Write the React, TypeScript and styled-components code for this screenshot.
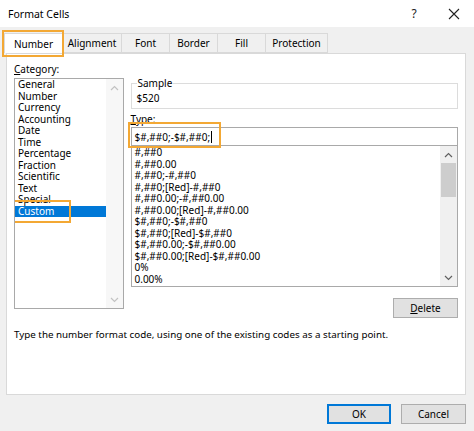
import styled, { createGlobalStyle } from "styled-components"

const GlobalStyle = createGlobalStyle`
  html, body {
    margin: 0;
    padding: 0;
    background: #ffffff;
  }
  body {
    font-family: "Noto Sans", "Open Sans", sans-serif;
    color: #000;
  }
`

const Dialog = styled.div`
  width: 474px;
  height: 431px;
  background: #f0f0f0;
  display: flex;
  flex-direction: column;
  overflow: hidden;
`

const TitleBar = styled.div`
  height: 27px;
  background: #ffffff;
  display: flex;
  align-items: center;
  padding-left: 8px;
  font-size: 10.5px;
`

const TitleText = styled.div`
  flex: 1;
`

const TitleButton = styled.div`
  width: 40px;
  height: 27px;
  display: flex;
  align-items: center;
  justify-content: center;
  font-size: 12px;
  color: #222;
`

const TabRow = styled.div`
  display: flex;
  padding: 6px 0 0 4px;
  height: 20px;
`

const Tab = styled.div<{ $w: number; $active?: boolean }>`
  position: relative;
  width: ${(p) => p.$w}px;
  height: 20px;
  box-sizing: border-box;
  display: flex;
  align-items: center;
  justify-content: center;
  font-size: 10px;
  background: ${(p) => (p.$active ? "#ffffff" : "#f0f0f0")};
  border: 1px solid #d9d9d9;
  border-left: none;
  border-bottom: ${(p) => (p.$active ? "none" : "1px solid #d9d9d9")};
  z-index: ${(p) => (p.$active ? 2 : 1)};
  &:first-child {
    border-left: 1px solid #d9d9d9;
  }
`

const Highlight = styled.div<{ $l: number; $t: number; $w: number; $h: number }>`
  position: absolute;
  left: ${(p) => p.$l}px;
  top: ${(p) => p.$t}px;
  width: ${(p) => p.$w}px;
  height: ${(p) => p.$h}px;
  box-sizing: border-box;
  border: 2.5px solid #f3a834;
  pointer-events: none;
  z-index: 5;
`

const Panel = styled.div`
  margin-left: 6px;
  width: 460px;
  height: 342px;
  box-sizing: border-box;
  background: #ffffff;
  border: 1px solid #d9d9d9;
  padding: 8px 7px 0 7px;
  font-size: 10px;
`

const Columns = styled.div`
  display: flex;
  gap: 7px;
`

const LeftCol = styled.div`
  width: 110px;
  display: flex;
  flex-direction: column;
`

const RightCol = styled.div`
  width: 329px;
  display: flex;
  flex-direction: column;
  padding-top: 20px;
`

const Label = styled.div`
  line-height: 14px;
  height: 14px;
  margin-bottom: 2px;
  & u {
    text-decoration: underline;
  }
`

const ListBox = styled.div<{ $h: number }>`
  position: relative;
  height: ${(p) => p.$h}px;
  box-sizing: border-box;
  border: 1px solid #a9a9a9;
  display: flex;
  background: #fff;
`

const ListItems = styled.div<{ $pad: number }>`
  flex: 1;
  overflow: hidden;
  padding-top: ${(p) => p.$pad}px;
`

const Item = styled.div<{ $selected?: boolean }>`
  position: relative;
  height: 11.5px;
  line-height: 11.5px;
  padding-left: 3px;
  white-space: nowrap;
  background: ${(p) => (p.$selected ? "#0078d7" : "transparent")};
  color: ${(p) => (p.$selected ? "#ffffff" : "#000")};
`

const Scrollbar = styled.div<{ $track: string }>`
  width: 17px;
  background: ${(p) => p.$track};
  display: flex;
  flex-direction: column;
  align-items: center;
`

const Arrow = styled.div`
  height: 17px;
  width: 17px;
  display: flex;
  align-items: center;
  justify-content: center;
`

const Track = styled.div`
  flex: 1;
  width: 100%;
  display: flex;
  flex-direction: column;
`

const Thumb = styled.div`
  height: 34px;
  margin: 0 1px;
  background: #cdcdcd;
`

const SampleBox = styled.fieldset`
  margin: -5px 0 0 0;
  padding: 0 5px 4px 5px;
  height: 32px;
  box-sizing: border-box;
  border: 1px solid #dcdcdc;
  & legend {
    padding: 0 1px;
    margin-left: 0;
    line-height: 12px;
    font-size: 10px;
  }
`

const SampleValue = styled.div`
  line-height: 14px;
  padding-top: 2px;
`

const TypeLabel = styled.div`
  margin-top: 4px;
  line-height: 12px;
  height: 12px;
  & u {
    text-decoration: underline;
  }
`

const TypeInput = styled.div`
  position: relative;
  margin-top: 2px;
  height: 18px;
  box-sizing: border-box;
  border: 1px solid #a9a9a9;
  border-bottom: none;
  display: flex;
  align-items: center;
  padding-left: 3px;
`

const Caret = styled.span`
  display: inline-block;
  width: 1px;
  height: 12px;
  background: #000;
  margin-left: 1px;
`

const DeleteRow = styled.div`
  display: flex;
  justify-content: flex-end;
  margin-top: 11px;
`

const Button = styled.div<{ $w: number; $default?: boolean }>`
  width: ${(p) => p.$w}px;
  height: 20px;
  box-sizing: border-box;
  background: #e1e1e1;
  border: 1px solid ${(p) => (p.$default ? "#0078d7" : "#adadad")};
  box-shadow: ${(p) => (p.$default ? "inset 0 0 0 1px #0078d7" : "none")};
  display: flex;
  align-items: center;
  justify-content: center;
  font-size: 10px;
  & u {
    text-decoration: underline;
  }
`

const Description = styled.div`
  margin-top: 11px;
  line-height: 12px;
  font-size: 9.8px;
`

const Footer = styled.div`
  display: flex;
  justify-content: flex-end;
  gap: 10px;
  padding: 9px 8px 0 0;
`

const Chevron = ({ up, color }: { up?: boolean; color: string }) => (
  <svg width="9" height="6" viewBox="0 0 9 6">
    <path
      d={up ? "M1 5 L4.5 1.5 L8 5" : "M1 1 L4.5 4.5 L8 1"}
      fill="none"
      stroke={color}
      strokeWidth="1.2"
    />
  </svg>
)

const categories = [
  "General",
  "Number",
  "Currency",
  "Accounting",
  "Date",
  "Time",
  "Percentage",
  "Fraction",
  "Scientific",
  "Text",
  "Special",
  "Custom",
]

const formats = [
  "#,##0",
  "#,##0.00",
  "#,##0;-#,##0",
  "#,##0;[Red]-#,##0",
  "#,##0.00;-#,##0.00",
  "#,##0.00;[Red]-#,##0.00",
  "$#,##0;-$#,##0",
  "$#,##0;[Red]-$#,##0",
  "$#,##0.00;-$#,##0.00",
  "$#,##0.00;[Red]-$#,##0.00",
  "0%",
  "0.00%",
]

const tabs = [
  { name: "Number", w: 59 },
  { name: "Alignment", w: 59 },
  { name: "Font", w: 48 },
  { name: "Border", w: 48 },
  { name: "Fill", w: 48 },
  { name: "Protection", w: 62 },
]

export default function App() {
  return (
    <>
      <GlobalStyle />
      <Dialog>
        <TitleBar>
          <TitleText>Format Cells</TitleText>
          <TitleButton>?</TitleButton>
          <TitleButton>
            <svg width="12" height="12" viewBox="0 0 12 12">
              <path d="M1 1 L11 11 M11 1 L1 11" stroke="#222" strokeWidth="1.1" />
            </svg>
          </TitleButton>
        </TitleBar>

        <TabRow>
          {tabs.map((t, i) => (
            <Tab key={t.name} $w={t.w} $active={i === 0}>
              {t.name}
              {i === 0 && <Highlight $l={-3} $t={-4} $w={62} $h={27} />}
            </Tab>
          ))}
        </TabRow>

        <Panel>
          <Columns>
            <LeftCol>
              <Label>
                <u>C</u>ategory:
              </Label>
              <ListBox $h={231}>
                <ListItems $pad={0}>
                  {categories.map((c) => (
                    <Item key={c} $selected={c === "Custom"}>
                      {c}
                      {c === "Custom" && <Highlight $l={-6} $t={-6} $w={62} $h={23} />}
                    </Item>
                  ))}
                </ListItems>
                <Scrollbar $track="#f7f7f7">
                  <Arrow>
                    <Chevron up color="#c2c2c2" />
                  </Arrow>
                  <Track />
                  <Arrow>
                    <Chevron color="#c2c2c2" />
                  </Arrow>
                </Scrollbar>
              </ListBox>
            </LeftCol>

            <RightCol>
              <SampleBox>
                <legend>Sample</legend>
                <SampleValue>$520</SampleValue>
              </SampleBox>
              <TypeLabel>
                <u>T</u>ype:
              </TypeLabel>
              <TypeInput>
                $#,##0;-$#,##0;
                <Caret />
                <Highlight $l={-4} $t={-6} $w={93} $h={26} />
              </TypeInput>
              <ListBox $h={142}>
                <ListItems $pad={1}>
                  {formats.map((f) => (
                    <Item key={f}>{f}</Item>
                  ))}
                </ListItems>
                <Scrollbar $track="#f0f0f0">
                  <Arrow>
                    <Chevron up color="#606060" />
                  </Arrow>
                  <Track>
                    <Thumb />
                  </Track>
                  <Arrow>
                    <Chevron color="#606060" />
                  </Arrow>
                </Scrollbar>
              </ListBox>
              <DeleteRow>
                <Button $w={65}>
                  <u>D</u>elete
                </Button>
              </DeleteRow>
            </RightCol>
          </Columns>
          <Description>
            Type the number format code, using one of the existing codes as a starting point.
          </Description>
        </Panel>

        <Footer>
          <Button $w={64} $default>
            OK
          </Button>
          <Button $w={65}>Cancel</Button>
        </Footer>
      </Dialog>
    </>
  )
}
